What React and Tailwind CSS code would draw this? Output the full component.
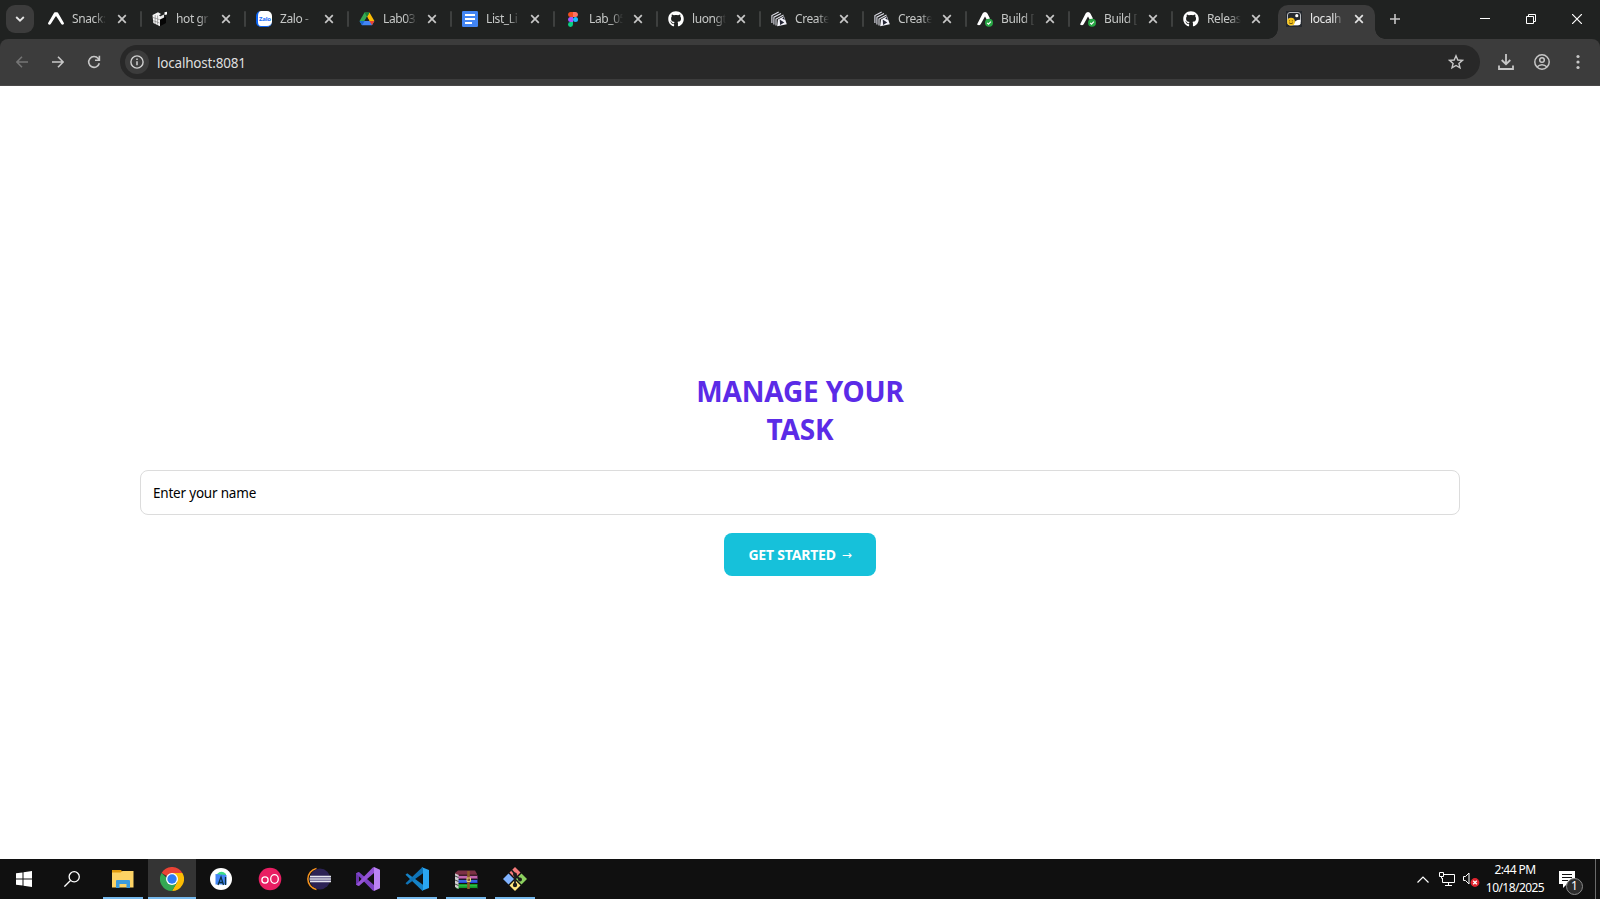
import React from "react";
import { FaGithub } from "react-icons/fa";

function ExpoMark({ badge }) {
  return (
    <svg viewBox="0 0 16 16" className="size-4">
      {badge ? (
        <path d="M0.4 12.7 5.6 2.6Q6.3 1 8 1t2.4 1.6L13 7.6 10 9 8 5.4 3.8 13q-1 1.6-2.6 1.1T.4 12.7Z" fill="#fff" />
      ) : (
        <path d="M6.9 1.2h2.3q.5 0 .8.6L15.9 12q.3 1.4-1 1.6-1.1.2-1.8-.9L8.4 5.6q-.4-.5-.8 0L2.9 12.7q-.7 1.1-1.9.9-1.2-.3-.9-1.6L6.1 1.8q.3-.6.8-.6Z" fill="#fff" />
      )}
      {badge && <circle cx="12" cy="11.8" r="4" fill="#28a745" />}
      {badge && <path d="m10.1 11.9 1.4 1.3 2.4-2.6" fill="none" stroke="#fff" strokeWidth="1.2" />}
    </svg>
  );
}

function CubeIcon() {
  return (
    <svg viewBox="0 0 16 16" className="size-4">
      <path d="M.5 4 6 1.2 9 3 7 4.500l2 1V8l-1 7.200L1.300 12Z" fill="#f4f4f4" />
      <path d="M8 8.500 14 6v6l-6 3.300Z" fill="#050505" />
      <path d="m9 5 3-1.500v3L9 8Z" fill="#e8e8e8" />
      <path d="M12.500 1.200 15 .8v2.600l-2.500.5Z" fill="#fff" />
      <path d="m1 6.500 6.800 2.200M1.200 9.600 7.600 12M3.200 4v9M5.600 4.500v9.200" stroke="#777" strokeWidth=".6" fill="none" />
    </svg>
  );
}

function ZaloIcon() {
  return (
    <span className="flex size-4 items-center justify-center overflow-hidden rounded-[5px] border-b border-l-2 border-[#0a62f0] bg-white text-[6px] leading-none font-bold tracking-[-0.2px] text-[#1a6cf5]">
      Zalo
    </span>
  );
}

function DriveIcon() {
  return (
    <svg viewBox="0 0 16 16" className="size-4">
      <path d="M5.500 1.500h5L8 5.800 3.200 14 .6 9.900Z" fill="#34a853" />
      <path d="M10.500 1.500 15.400 10h-5L5.500 1.500 8 5.800Z" fill="#fbbc04" />
      <path d="M5.500 1.500h5L8 5.800Z" fill="#188038" />
      <path d="M.6 10h14.800L13 14.200H3Z" fill="#4285f4" />
      <path d="M10.400 10h5L13 14.200Z" fill="#ea4335" />
      <path d="M.6 10h5L3 14.200Z" fill="#1967d2" />
      <path d="m8 5.800 2.400 4.200H5.600Z" fill="#202221" />
    </svg>
  );
}

function DocsIcon() {
  return (
    <svg viewBox="0 0 16 16" className="size-4">
      <rect width="16" height="16" rx="1.3" fill="#4285f4" />
      <path d="M3 4h10M3 8h10M3 12h7" stroke="#fff" strokeWidth="2" />
    </svg>
  );
}

function FigmaIcon() {
  return (
    <svg viewBox="0 0 16 16" className="size-4">
      <path d="M8 1H5.600a2.500 2.500 0 0 0 0 5H8Z" fill="#f24e1e" />
      <path d="M8 1h2.400a2.500 2.500 0 0 1 0 5H8Z" fill="#ff7262" />
      <path d="M8 6H5.600a2.500 2.500 0 0 0 0 5H8Z" fill="#a259ff" />
      <circle cx="10.500" cy="8.400" r="2.500" fill="#1abcfe" />
      <path d="M8 11H5.600A2.500 2.500 0 1 0 8 13.400Z" fill="#0acf83" />
    </svg>
  );
}

function PapersIcon() {
  return (
    <svg viewBox="0 0 16 16" className="size-4">
      <path d="M.9 12V4.600L7.700 1M2.900 13.500V6.200L10 2.600M5 14.500V8l7.500-4" fill="none" stroke="#dedee8" strokeWidth="1.100" />
      <path d="m7 8.500 6-3.200 2.800 8-9.600 2Z" fill="#f3f3fa" />
      <path d="m8.700 8.500 4.600 3-4.200 2.400Z" fill="#252635" />
      <path d="m13 6 .8 3-2.600-1.500Z" fill="#252635" />
    </svg>
  );
}

function LocalIcon() {
  return (
    <svg viewBox="0 0 16 16" className="size-4">
      <rect width="16" height="16" fill="#25292e" />
      <rect x="1.500" y="1.500" width="13" height="12.500" rx="2.500" fill="none" stroke="#b9bcc0" />
      <circle cx="10.800" cy="4.700" r="1.600" fill="#fff" />
      <path d="M7 14q2-5.500 7.300-5.200v3.700q0 1.600-2 1.600Z" fill="#fff" />
      <circle cx="5" cy="10.600" r="3.900" fill="#f7c51e" />
      <path d="M3.600 9.300v1M6.300 9.300v1M3 11.800q2 1.800 4 0" stroke="#4f3b08" strokeWidth=".8" fill="none" />
    </svg>
  );
}

function GithubMark() {
  return <FaGithub className="size-4 text-white" />;
}

const tabs = [
  { icon: <ExpoMark />, title: "Snack:" },
  { icon: <CubeIcon />, title: "hot gr" },
  { icon: <ZaloIcon />, title: "Zalo -" },
  { icon: <DriveIcon />, title: "Lab03." },
  { icon: <DocsIcon />, title: "List_Li" },
  { icon: <FigmaIcon />, title: "Lab_05" },
  { icon: <GithubMark />, title: "luongt" },
  { icon: <PapersIcon />, title: "Create" },
  { icon: <PapersIcon />, title: "Create" },
  { icon: <ExpoMark badge />, title: "Build [" },
  { icon: <ExpoMark badge />, title: "Build [" },
  { icon: <GithubMark />, title: "Releas" },
];

function Close({ className }) {
  return (
    <svg viewBox="0 0 10 10" className={className}>
      <path d="m1.2 1.2 7.6 7.6M8.8 1.2 1.2 8.8" stroke="currentColor" strokeWidth="1.7" fill="none" />
    </svg>
  );
}

function TabBody({ icon, title, active, wide }) {
  return (
    <>
      {icon}
      <span
        className={
          "ml-2 w-[34px] overflow-hidden text-[12px] leading-4 tracking-[-0.4px] whitespace-nowrap [mask-image:linear-gradient(to_right,#000_66%,transparent)] " +
          (active ? "text-[#e8e8e8]" : "text-[#c6c8c7]")
        }
      >
        {title}
      </span>
      <Close
        className={
          "size-[10px] " + (wide ? "ml-[11px] " : "ml-[10px] ") + (active ? "text-[#e3e3e3]" : "text-[#c7c7c7]")
        }
      />
    </>
  );
}

function TabStrip() {
  return (
    <div className="flex h-[39px] bg-[#202221]">
      <div className="mt-[5px] ml-[6px] flex size-7 items-center justify-center rounded-[9px] bg-[#3c3c3c]">
        <svg viewBox="0 0 10 6" className="h-[6px] w-[10px]">
          <path d="m1.2 1 3.8 3.7L8.800 1" fill="none" stroke="#e6e6e6" strokeWidth="1.8" />
        </svg>
      </div>
      <div className="ml-[6px] flex h-[38px]">
        {tabs.map((t, i) => (
          <div key={i} className={"flex items-center pl-2 " + (i < 2 ? "w-[104px]" : "w-[103px]")}>
            <TabBody icon={t.icon} title={t.title} wide={i < 2} />
            {i < 11 && <span className="ml-[13px] h-4 w-[2px] rounded-full bg-[#3e403f]" />}
          </div>
        ))}
      </div>
      <div className="relative mt-[5px] h-[34px] w-[97px] rounded-t-[10px] bg-[#3c3c3c]">
        <div className="flex h-[28px] items-center pl-2">
          <TabBody icon={<LocalIcon />} title="localh" active />
        </div>
        <span className="absolute bottom-0 -left-[10px] size-[10px] bg-[radial-gradient(circle_at_0_0,transparent_9.500px,#3c3c3c_10px)]" />
        <span className="absolute -right-[10px] bottom-0 size-[10px] bg-[radial-gradient(circle_at_100%_0,transparent_9.500px,#3c3c3c_10px)]" />
      </div>
      <svg viewBox="0 0 10 10" className="mt-[14px] ml-[15px] size-[10px]">
        <path d="M5 0v10M0 5h10" stroke="#c7c7c7" strokeWidth="1.6" />
      </svg>
      <div className="ml-auto flex h-[38px] items-center pr-[18px] text-white">
        <svg viewBox="0 0 10 10" className="size-[10px]">
          <path d="M0 4.500h10" stroke="currentColor" />
        </svg>
        <svg viewBox="0 0 10 10" className="ml-9 size-[10px]">
          <path d="M.5 2.500h7v7h-7ZM2.500 2.500v-2h7v7h-2" fill="none" stroke="currentColor" />
        </svg>
        <svg viewBox="0 0 10 10" className="ml-9 size-[10px]">
          <path d="m0 0 10 10M10 0 0 10" stroke="currentColor" strokeWidth="1.200" />
        </svg>
      </div>
    </div>
  );
}

function Toolbar() {
  return (
    <div className="bg-[#202221]">
      <div className="flex h-[47px] items-start rounded-t-[8px] border-b border-[#4a4848] bg-[#3c3c3c] pt-[6px]">
        <div className="flex h-[34px] items-center">
          <svg viewBox="0 0 12 12" className="ml-4 size-3">
            <path d="M12 6H1.200M6 .8.9 6 6 11.200" fill="none" stroke="#757575" strokeWidth="1.500" />
          </svg>
          <svg viewBox="0 0 12 12" className="ml-6 size-3">
            <path d="M0 6h10.800M6 .8 11.100 6 6 11.200" fill="none" stroke="#c7c7c7" strokeWidth="1.600" />
          </svg>
          <svg viewBox="0 0 14 14" className="ml-[23px] size-[14px]">
            <path d="M12.300 8.300A5.400 5.400 0 1 1 11.200 3.500L12.400 5M12.400 .8v4.500H8" fill="none" stroke="#c7c7c7" strokeWidth="1.600" />
          </svg>
        </div>
        <div className="ml-[19px] flex h-[34px] w-[1360px] items-center rounded-full bg-[#282828] pl-[5px]">
          <span className="flex size-6 items-center justify-center rounded-full bg-[#3c3c3c]">
            <svg viewBox="0 0 14 14" className="size-[14px]">
              <circle cx="7" cy="7" r="6.100" fill="none" stroke="#d0d0d0" strokeWidth="1.400" />
              <path d="M7 6.200v4M7 3.500v1.500" stroke="#d0d0d0" strokeWidth="1.500" />
            </svg>
          </span>
          <span className="ml-2 pt-px text-[13.500px] leading-5 tracking-[-0.2px] text-[#dedede]">localhost:8081</span>
          <svg viewBox="0 0 16 16" className="mr-4 ml-auto size-4">
            <path d="m8 1.800 1.800 4.200 4.600.4-3.500 3 1.100 4.500L8 11.500l-4 2.400 1.100-4.500-3.500-3L6.200 6Z" fill="none" stroke="#c7c7c7" strokeWidth="1.400" />
          </svg>
        </div>
        <div className="flex h-[34px] items-center">
          <svg viewBox="0 0 16 16" className="ml-[18px] size-4">
            <path d="M8 0v10M3.700 6 8 10.200 12.300 6M1 11.500V15h14v-3.500" fill="none" stroke="#c7c7c7" strokeWidth="1.800" />
          </svg>
          <svg viewBox="0 0 16 16" className="ml-5 size-4">
            <circle cx="8" cy="8" r="7.200" fill="none" stroke="#c7c7c7" strokeWidth="1.500" />
            <circle cx="8" cy="6" r="2.300" fill="none" stroke="#c7c7c7" strokeWidth="1.500" />
            <path d="M3 13q2.200-2.300 5-2.300T13 13" fill="none" stroke="#c7c7c7" strokeWidth="1.500" />
          </svg>
          <svg viewBox="0 0 4 16" className="ml-[26px] h-4 w-1">
            <circle cx="2" cy="2.500" r="1.600" fill="#c7c7c7" />
            <circle cx="2" cy="8" r="1.600" fill="#c7c7c7" />
            <circle cx="2" cy="13.500" r="1.600" fill="#c7c7c7" />
          </svg>
        </div>
      </div>
    </div>
  );
}

function Page() {
  return (
    <main className="flex flex-1 flex-col items-center bg-white pt-[286px]">
      <h1 className="text-center text-[28px] leading-[38px] font-bold tracking-[-0.15px] text-[#5b2be7]">
        MANAGE YOUR
        <br />
        TASK
      </h1>
      <div className="mt-[22px] flex h-[45px] w-[1320px] items-center rounded-[8px] border border-[#dcdcdc] px-3 pt-px text-[13.500px] tracking-[-0.2px] text-black">
        Enter your name
      </div>
      <button className="mt-[18px] flex h-[43px] w-[152px] items-center justify-center gap-[6px] rounded-[8px] bg-[#16c1da] text-[14px] font-bold tracking-[-0.2px] text-white">
        <span>GET STARTED</span>
        <span className="font-['DejaVu_Sans',sans-serif] text-[12px] font-normal">→</span>
      </button>
    </main>
  );
}

function Explorer() {
  return (
    <svg viewBox="0 0 24 24" className="size-6">
      <path d="M1 3h9l1.500 2H22v3H1Z" fill="#e19a0c" />
      <path d="M1 5.500h8.500L11.500 4H22.500v16.500H1Z" fill="#fdd365" />
      <path d="M5 21v-7q0-1 1-1h12q1 0 1 1v7h-3.500v-4h-7v4Z" fill="#3c9bdc" />
    </svg>
  );
}

function Chrome() {
  return (
    <svg viewBox="0 0 24 24" className="size-6">
      <path d="M12 12 1.600 6A12 12 0 0 1 22.400 6Z" fill="#ea4335" />
      <path d="M12 6h10.400A12 12 0 0 1 12 24l5.200-9Z" fill="#fbbc04" />
      <path d="M1.600 6A12 12 0 0 0 12 24l5.200-9-5.200 1Z" fill="#34a853" />
      <circle cx="12" cy="12" r="6" fill="#fff" />
      <circle cx="12" cy="12" r="4.700" fill="#2f7cf3" />
    </svg>
  );
}

function AndroidStudio() {
  return (
    <svg viewBox="0 0 24 24" className="size-6">
      <circle cx="12" cy="12" r="11" fill="#fff" />
      <path d="M8 7q4.500-4.500 9 0v2H8Z" fill="#3ddc84" />
      <path d="M6.500 7 17.500 8v9.500h-11Z" fill="#4285f4" />
      <path d="m9 18 3-8 2.500 8M10 15.500h4M16.500 10v8" fill="none" stroke="#073042" strokeWidth="1.300" />
    </svg>
  );
}

function Oo() {
  return (
    <svg viewBox="0 0 24 24" className="size-6">
      <circle cx="12" cy="12" r="11.300" fill="#e91e63" />
      <circle cx="7" cy="13" r="3.100" fill="none" stroke="#fff" strokeWidth="1.300" />
      <ellipse cx="16.500" cy="12" rx="3.800" ry="4.300" fill="none" stroke="#fff" strokeWidth="1.300" />
    </svg>
  );
}

function Eclipse() {
  return (
    <svg viewBox="0 0 24 24" className="size-6">
      <path d="M9.500 1.500a10.700 10.700 0 0 0 0 21" fill="none" stroke="#f7941e" strokeWidth="1.500" />
      <circle cx="13" cy="12" r="10.400" fill="#2c2255" />
      <path d="M3 9.500h21M2.600 12h21.600M3 14.500h21" stroke="#e6e6f0" strokeWidth="1.600" />
      <path d="M2.600 10.800h21.600M2.600 13.300h21.600" stroke="#9a98bd" strokeWidth=".8" />
    </svg>
  );
}

function VisualStudio() {
  return (
    <svg viewBox="0 0 24 24" className="size-6">
      <path d="M0 6.200 3 5v14l-3-1.200Z" fill="#6a35ad" />
      <path d="M3 5 18 18v6L16.500 23.300 0 6.200Z" fill="#7c43c4" />
      <path d="M3 19 18 6V0L16.500.7 0 17.800Z" fill="#9452d6" />
      <path d="m18 0 6 2.800v18.400L18 24Z" fill="#bb83f5" />
    </svg>
  );
}

function VSCode() {
  return (
    <svg viewBox="0 0 24 24" className="size-6">
      <path d="M.5 7.800 2.200 6.300 18 17.800V24L17 23.600Z" fill="#1583c8" />
      <path d="M.5 16.200 2.200 17.700 18 6.200V0L17 .4Z" fill="#0f74b8" />
      <path d="m17 .2 7 2.800v18l-7 2.800q1-.5 1-1.600V1.800q0-1.100-1-1.600Z" fill="#2aa6f2" />
    </svg>
  );
}

function WinRar() {
  return (
    <svg viewBox="0 0 24 24" className="size-6">
      <path d="M1 6 4 3.500h17L23 7v2H2Z" fill="#7d3146" />
      <path d="M2 8.500h21.500V12H2Z" fill="#b0489c" />
      <path d="M2 12.500h21.500V16H2Z" fill="#2446d8" />
      <path d="M2 17h21.500v4.500H2Z" fill="#129a2b" />
      <path d="M5 10h18" stroke="#e2a0d4" strokeWidth=".7" />
      <path d="M5 14h18" stroke="#5aa0f2" strokeWidth=".7" />
      <path d="M5 18.800h18" stroke="#54df57" strokeWidth=".7" />
      <path d="m1 6.500 3.500 1.500v14L1 20Z" fill="#cfcfcf" />
      <path d="m1 9 3.500 1.500M1 13l3.500 1.500M1 17l3.500 1.500" stroke="#444" />
      <path d="M5 12.200h18M5 16.500h18M5 8.200h18M5 21.600h18" stroke="#18120c" />
      <path d="M14.500 4v18" stroke="#8f5a2c" strokeWidth="2.600" />
      <path d="M13 11h3.500v3.500H13Z" fill="none" stroke="#e4ce76" />
    </svg>
  );
}

function GitIcon() {
  return (
    <svg viewBox="0 0 24 24" className="size-6">
      <path d="m12 0 5.500 5.500L12 11 6.500 5.500Z" fill="#f47b7b" />
      <path d="m18.500 6.500 5.500 5.500-5.500 5.500L13 12Z" fill="#8cd05f" />
      <path d="m5.500 6.500 5.500 5.500-5.500 5.500L0 12Z" fill="#80b3ff" />
      <path d="m12 13 5.500 5.500L12 24l-5.500-5.500Z" fill="#ffe680" />
      <path d="M8.500 3 12 7v11M12 8l5 4.500" fill="none" stroke="#1b1b1b" strokeWidth="1.800" />
      <circle cx="12" cy="7.500" r="2" fill="#1b1b1b" />
      <circle cx="17" cy="12.500" r="2" fill="#1b1b1b" />
      <circle cx="12" cy="18" r="2.200" fill="#1b1b1b" />
    </svg>
  );
}

const apps = [
  { icon: <Explorer />, open: true },
  { icon: <Chrome />, focused: true },
  { icon: <AndroidStudio /> },
  { icon: <Oo /> },
  { icon: <Eclipse /> },
  { icon: <VisualStudio /> },
  { icon: <VSCode />, open: true },
  { icon: <WinRar />, open: true },
  { icon: <GitIcon />, open: true },
];

function Taskbar() {
  return (
    <footer className="flex h-10 items-stretch bg-[#101010] text-white">
      <div className="flex w-12 items-center justify-center">
        <svg viewBox="0 0 16 16" className="size-4">
          <path d="m0 2.300 6.500-.9v6.100H0ZM7.500 1.200 16 0v7.500H7.500ZM0 8.500h6.500v6.100L0 13.700ZM7.500 8.500H16V16l-8.500-1.200Z" fill="#fff" />
        </svg>
      </div>
      <div className="mr-[3px] flex w-12 items-center justify-center">
        <svg viewBox="0 0 16 16" className="size-4">
          <circle cx="10.200" cy="5.800" r="5.100" fill="none" stroke="#fff" strokeWidth="1.300" />
          <path d="M6.500 9.500.4 15.600" stroke="#fff" strokeWidth="1.300" />
        </svg>
      </div>
      <div className="flex gap-px">
        {apps.map((a, i) => (
          <div key={i} className={"flex w-12 flex-col items-center " + (a.focused ? "bg-[#343434]" : "")}>
            <span className="flex h-[38px] items-center pt-[2px]">{a.icon}</span>
            <span className={"h-[2px] " + (a.focused ? "w-12 bg-[#76b9ed]" : a.open ? "w-10 bg-[#76b9ed]" : "")} />
          </div>
        ))}
      </div>
      <div className="ml-auto flex items-center">
        <svg viewBox="0 0 12 7" className="h-[7px] w-3">
          <path d="m.5 6.500 5.500-5.500 5.500 5.500" fill="none" stroke="#fff" strokeWidth="1.200" />
        </svg>
        <svg viewBox="0 0 16 14" className="ml-[10px] h-[14px] w-4">
          <path d="M5 2.500h10.500v8H3.500V6M9.500 10.500v3M6 13.500h7M.5.5h4v4h-4ZM2.500 4.500v2" fill="none" stroke="#fff" />
        </svg>
        <svg viewBox="0 0 17 16" className="ml-2 h-4 w-[17px]">
          <path d="M.5 5.500h2L6 2v11L2.500 9.500h-2Z" fill="none" stroke="#fff" />
          <circle cx="12" cy="11.500" r="4.400" fill="#e0252f" />
          <path d="m10.200 9.700 3.600 3.600M13.800 9.700l-3.600 3.600" stroke="#fff" strokeWidth="1.300" />
        </svg>
        <div className="ml-[5px] flex w-[60px] flex-col text-center text-[12px] leading-[18px] tracking-[-0.55px] whitespace-nowrap">
          <span>2:44 PM</span>
          <span>10/18/2025</span>
        </div>
        <div className="relative mt-[7px] ml-[14px] h-6 w-6">
          <svg viewBox="0 0 24 24" className="size-6">
            <path d="M0 0h16v13H8l-4 4v-4H0Z" fill="#fff" />
            <path d="M3 3.500h10M3 6.500h10M3 9.500h6" stroke="#111" />
          </svg>
          <span className="absolute top-[7px] left-[7px] flex size-[17px] items-center justify-center rounded-full border border-[#8a8a8a] bg-[#2c2c2c] text-[12px] leading-none">
            1
          </span>
        </div>
        <span className="ml-3 h-10 w-px bg-[#6a6a6a]" />
        <span className="w-1" />
      </div>
    </footer>
  );
}

export default function App() {
  return (
    <div className="flex h-[899px] w-[1600px] flex-col overflow-hidden bg-white font-['Noto_Sans',sans-serif]">
      <TabStrip />
      <Toolbar />
      <Page />
      <Taskbar />
    </div>
  );
}
